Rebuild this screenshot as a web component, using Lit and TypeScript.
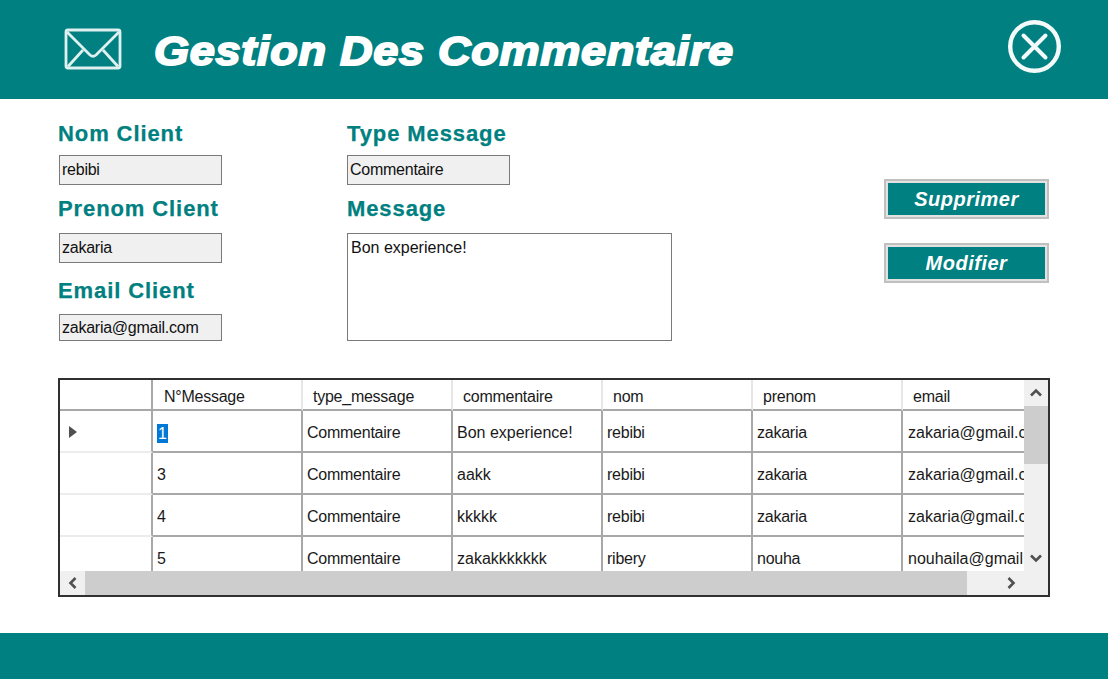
import { LitElement, html, css, svg } from "lit";
import { customElement } from "lit/decorators.js";

const columns = ["N°Message", "type_message", "commentaire", "nom", "prenom", "email"];
const rows = [
  ["1", "Commentaire", "Bon experience!", "rebibi", "zakaria", "zakaria@gmail.com"],
  ["3", "Commentaire", "aakk", "rebibi", "zakaria", "zakaria@gmail.com"],
  ["4", "Commentaire", "kkkkk", "rebibi", "zakaria", "zakaria@gmail.com"],
  ["5", "Commentaire", "zakakkkkkkk", "ribery", "nouha", "nouhaila@gmail.com"],
];

const chevron = (d: string) => html`<svg class="chev" width="14" height="14" viewBox="0 0 14 14">${svg`<path d=${d} fill="none" stroke="#505050" stroke-width="2.6"/>`}</svg>`;

@customElement("app-root")
export class AppRoot extends LitElement {
  static styles = css`
    :host { display: flex; flex-direction: column; width: 1108px; height: 679px; background: #fff; font-family: "Liberation Sans", Arial, sans-serif; overflow: hidden; }
    .top { height: 99px; flex: none; background: #008080; display: flex; align-items: flex-start; padding-left: 64px; box-sizing: border-box; color: #fff; }
    .mail { margin-top: 28px; flex: none; }
    .title { margin: 28px 0 0 32px; font-size: 41px; line-height: 46px; font-weight: 700; font-style: italic; letter-spacing: 0.63px; -webkit-text-stroke: 1.9px #fff; white-space: nowrap; width: 853px; transform: scaleX(1.1); transform-origin: left center; }
    .close { margin-top: 20px; flex: none; }

    .main { flex: 1; padding: 23px 58px 0; display: flex; flex-direction: column; }
    .form { display: grid; grid-template-columns: 289px 325px 1fr; height: 256px; }
    .col { display: flex; flex-direction: column; align-items: flex-start; }
    label { font-size: 22px; line-height: 23px; height: 23px; font-weight: 700; color: #008080; letter-spacing: 0.9px; -webkit-text-stroke: 0.25px #008080; white-space: nowrap; }
    .box { box-sizing: border-box; width: 163px; margin: 10px 0 0 1px; border: 1px solid #7a7a7a; outline: 0; background: #f0f0f0; font-size: 16px; color: #111; padding-left: 2px; display: flex; align-items: center; letter-spacing: -0.25px; height: 30px; }
    .mid .box { margin-left: 0; }
    .l2 { margin-top: 12px; }
    .pre { margin-top: 13px; }
    .em { margin-top: 16px; }
    .mail-box { height: 27px; margin-top: 12px; }
    .area { box-sizing: border-box; width: 325px; height: 108px; margin-top: 13px; border: 1px solid #7a7a7a; background: #fff; font-size: 16px; color: #111; padding: 5px 3px; line-height: 18px; letter-spacing: 0; }
    .actions { display: flex; flex-direction: column; align-items: flex-end; gap: 24px; padding-top: 57px; }
    .btn { box-sizing: border-box; width: 165px; height: 40px; margin-right: 1px; border: 2px solid #c0c0c0; padding: 2px; background: #e2e2e2; }
    .btn span { display: flex; align-items: center; justify-content: center; height: 100%; background: #008080; color: #fff; font-size: 20px; font-weight: 700; font-style: italic; letter-spacing: 0.5px; }

    .table { box-sizing: border-box; width: 992px; height: 219px; border: 2px solid #303030; background: #f0f0f0; display: grid; grid-template-columns: 1fr 24px; grid-template-rows: 1fr 24px; }
    .view { overflow: hidden; background: #fff; }
    .grid { display: grid; grid-template-columns: 93px repeat(6, 150px); grid-template-rows: 31px repeat(4, 42px); width: 993px; font-size: 16px; color: #1a1a1a; letter-spacing: -0.25px; }
    .grid > div { box-sizing: border-box; white-space: nowrap; overflow: hidden; display: flex; align-items: center; }
    .head { border-right: 2px solid #e6e6e6; border-bottom: 2px solid #a8a8a8; padding: 5px 0 0 10px; }
    .grid > .first { padding-left: 11px; }
    .head0 { border-bottom: 2px solid #a8a8a8; border-right: 2px solid #a8a8a8; }
    .cell { border-right: 2px solid #a8a8a8; border-bottom: 2px solid #a8a8a8; padding: 4px 0 0 4px; }
    .c2 { letter-spacing: 0; }
    .grid > .c5 { letter-spacing: 0; padding-left: 5px; }
    .rowhead { border-right: 2px solid #a8a8a8; border-bottom: 2px solid #ececec; padding: 2px 0 0 9px; }
    .sel { background: #0078d7; color: #fff; padding: 0 1px; line-height: 19px; }
    .arrow { width: 0; height: 0; border-left: 8px solid #505050; border-top: 6px solid transparent; border-bottom: 6px solid transparent; }
    .vbar, .hbar { background: #f0f0f0; display: flex; align-items: center; }
    .vbar { flex-direction: column; }
    .chev { flex: none; }
    .sq { height: 26px; display: flex; align-items: center; justify-content: center; flex: none; }
    .vthumb { width: 100%; height: 58px; background: #cdcdcd; flex: none; }
    .vfill { flex: 1; }
    .hthumb { width: 882px; height: 100%; background: #cdcdcd; flex: none; }
    .hsq { width: 25px; height: 100%; display: flex; align-items: center; justify-content: center; flex: none; }
    .hfill { flex: 1; display: flex; align-items: center; justify-content: flex-end; padding-right: 6px; }

    .bottom { height: 46px; flex: none; background: #008080; }
  `;

  render() {
    return html`
      <header class="top">
        <svg class="mail" width="58" height="43" viewBox="0 0 58 43" fill="none" stroke="#dff0f0" stroke-width="2.8">
          <rect x="2" y="2" width="54" height="38" rx="2"/>
          <path d="M3 4 L26 27 Q29 29.5 32 27 L55 4"/>
          <path d="M4 38.5 L19 22 M54 38.5 L39 22"/>
        </svg>
        <div class="title">Gestion Des Commentaire</div>
        <svg class="close" width="54" height="54" viewBox="0 0 54 54" fill="none" stroke="#f4fafa">
          <circle cx="27.5" cy="26.5" r="24.3" stroke-width="4.4"/>
          <path d="M16.5 15.5 L38.5 37.5 M38.5 15.5 L16.5 37.5" stroke-width="4" stroke-linecap="round"/>
        </svg>
      </header>
      <main class="main">
        <section class="form">
          <div class="col">
            <label>Nom Client</label>
            <div class="box">rebibi</div>
            <label class="l2">Prenom Client</label>
            <div class="box pre">zakaria</div>
            <label class="em">Email Client</label>
            <div class="box mail-box">zakaria@gmail.com</div>
          </div>
          <div class="col mid">
            <label>Type Message</label>
            <div class="box">Commentaire</div>
            <label class="l2">Message</label>
            <div class="area">Bon experience!</div>
          </div>
          <div class="actions">
            <div class="btn"><span>Supprimer</span></div>
            <div class="btn"><span>Modifier</span></div>
          </div>
        </section>
        <section class="table">
          <div class="view">
            <div class="grid">
              <div class="head0"></div>
              ${columns.map((c, i) => html`<div class="head ${i === 0 ? "first" : ""}">${c}</div>`)}
              ${rows.map((r, i) => html`
                <div class="rowhead">${i === 0 ? html`<span class="arrow"></span>` : ""}</div>
                ${r.map((v, j) => html`<div class="cell ${j === 2 ? "c2" : j === 5 ? "c5" : ""}">${i === 0 && j === 0 ? html`<span class="sel">${v}</span>` : v}</div>`)}
              `)}
            </div>
          </div>
          <div class="vbar">
            <div class="sq">${chevron("M2 9.5 L7 4.5 L12 9.5")}</div>
            <div class="vthumb"></div>
            <div class="vfill"></div>
            <div class="sq">${chevron("M2 4.5 L7 9.5 L12 4.5")}</div>
          </div>
          <div class="hbar">
            <div class="hsq">${chevron("M9.5 2 L4.5 7 L9.5 12")}</div>
            <div class="hthumb"></div>
            <div class="hfill">${chevron("M4.5 2 L9.5 7 L4.5 12")}</div>
          </div>
          <div class="hbar"></div>
        </section>
      </main>
      <footer class="bottom"></footer>
    `;
  }
}
